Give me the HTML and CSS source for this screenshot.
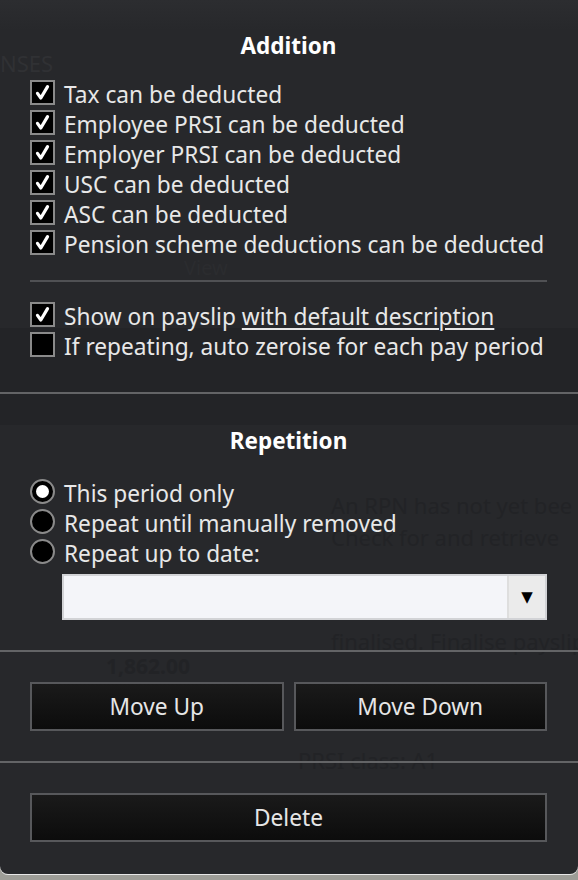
FILE: index.html
```html
<!DOCTYPE html>
<html>
<head>
<meta charset="utf-8">
<link rel="stylesheet" href="styles.css">
</head>
<body>
<div class="popup">
  <div class="backdrop" aria-hidden="true">
    <div class="band band-top"></div>
    <div class="band band-mid"></div>
    <span class="ghost g-nses">NSES</span>
    <span class="ghost g-view">View</span>
    <span class="ghost g-rpn1">An RPN has not yet bee</span>
    <span class="ghost g-rpn2">Check for and retrieve</span>
    <span class="ghost g-fin">finalised. Finalise payslip</span>
    <span class="ghost g-amt">1,862.00</span>
    <span class="ghost g-prsi">PRSI class: A1</span>
  </div>

  <section class="section section-addition">
    <h2 class="heading">Addition</h2>
    <ul class="list">
      <li class="row"><span class="check on"><svg viewBox="0 0 25 25"><path d="M6.5 13.5 L10.5 19 L18.5 5.5"/></svg></span>Tax can be deducted</li>
      <li class="row"><span class="check on"><svg viewBox="0 0 25 25"><path d="M6.5 13.5 L10.5 19 L18.5 5.5"/></svg></span>Employee PRSI can be deducted</li>
      <li class="row"><span class="check on"><svg viewBox="0 0 25 25"><path d="M6.5 13.5 L10.5 19 L18.5 5.5"/></svg></span>Employer PRSI can be deducted</li>
      <li class="row"><span class="check on"><svg viewBox="0 0 25 25"><path d="M6.5 13.5 L10.5 19 L18.5 5.5"/></svg></span>USC can be deducted</li>
      <li class="row"><span class="check on"><svg viewBox="0 0 25 25"><path d="M6.5 13.5 L10.5 19 L18.5 5.5"/></svg></span>ASC can be deducted</li>
      <li class="row"><span class="check on"><svg viewBox="0 0 25 25"><path d="M6.5 13.5 L10.5 19 L18.5 5.5"/></svg></span>Pension scheme deductions can be deducted</li>
    </ul>
    <hr class="sep">
    <ul class="list">
      <li class="row"><span class="check on"><svg viewBox="0 0 25 25"><path d="M6.5 13.5 L10.5 19 L18.5 5.5"/></svg></span>Show on payslip&nbsp;<span class="link">with default description</span></li>
      <li class="row"><span class="check"></span>If repeating, auto zeroise for each pay period</li>
    </ul>
  </section>

  <hr class="divider">

  <section class="section section-repetition">
    <h2 class="heading">Repetition</h2>
    <ul class="list">
      <li class="row"><span class="radio on"></span>This period only</li>
      <li class="row"><span class="radio"></span>Repeat until manually removed</li>
      <li class="row"><span class="radio"></span>Repeat up to date:</li>
    </ul>
    <div class="dropdown">
      <div class="dropdown-field"></div>
      <div class="dropdown-btn">▼</div>
    </div>
  </section>

  <hr class="divider">

  <section class="section section-buttons">
    <div class="btn-row">
      <button class="btn">Move Up</button>
      <button class="btn">Move Down</button>
    </div>
  </section>

  <hr class="divider">

  <section class="section section-delete">
    <button class="btn btn-wide">Delete</button>
  </section>
</div>
</body>
</html>
```

FILE: styles.css
```css
* { box-sizing: border-box; }

html, body {
  margin: 0;
  padding: 0;
}

body {
  width: 578px;
  height: 880px;
  background: #9d9d97;
  font-family: "Noto Sans", "Open Sans", "DejaVu Sans", sans-serif;
  color: #e6e6e6;
  overflow: hidden;
}

.popup {
  position: relative;
  width: 578px;
  height: 874px;
  background: #27282b;
  border-radius: 0 0 8px 8px;
  overflow: hidden;
  box-shadow: 0 1px 0 #e8e8e8;
}

/* faint underlying page showing through the overlay */
.backdrop {
  position: absolute;
  inset: 0;
  z-index: 0;
  pointer-events: none;
  overflow: hidden;
}

.band {
  position: absolute;
  left: 0;
  right: 0;
}

.band-top {
  top: 0;
  height: 30px;
  background: linear-gradient(#2c2d30, #27282b);
}

.band-mid {
  top: 328px;
  height: 97px;
  background: #232427;
}

.ghost {
  position: absolute;
  font-size: 22px;
  color: #222326;
  white-space: nowrap;
  line-height: 1;
}

.g-nses { left: 0; top: 52px; color: #303134; }
.g-view { left: 184px; top: 258px; color: #2b2c2f; font-size: 20px; }
.g-rpn1 { left: 331px; top: 494px; }
.g-rpn2 { left: 331px; top: 526px; }
.g-fin { left: 331px; top: 630px; }
.g-amt { left: 106px; top: 656px; font-size: 21px; font-weight: bold; }
.g-prsi { left: 298px; top: 749px; }

.section {
  position: relative;
  z-index: 1;
  padding: 0 31px 0 30px;
}

.heading {
  margin: 0;
  height: 28px;
  line-height: 28px;
  text-align: center;
  font-size: 22.5px;
  font-weight: bold;
  color: #ffffff;
}

.section-addition { padding-top: 32px; padding-bottom: 35px; }
.section-addition .heading { margin-bottom: 20px; }

.list {
  list-style: none;
  margin: 0;
  padding: 0;
  display: flex;
  flex-direction: column;
  gap: 5px;
}

.row {
  display: flex;
  align-items: center;
  height: 25px;
  font-size: 22.7px;
  white-space: nowrap;
  color: #e8e8e8;
  padding-top: 4px;
}

.check {
  flex: none;
  width: 25px;
  height: 25px;
  margin-top: -4px;
  margin-right: 9px;
  border: 2px solid #8a8a8a;
  background: #000;
  display: flex;
  align-items: center;
  justify-content: center;
}

.check svg {
  width: 21px;
  height: 21px;
  fill: none;
  stroke: #ffffff;
  stroke-width: 3.8;
  stroke-linecap: round;
  stroke-linejoin: round;
}

.link {
  text-decoration: underline;
  text-underline-offset: 3px;
  text-decoration-thickness: 1.5px;
}

.sep {
  margin: 25px 0 20px 0;
  height: 2px;
  border: 0;
  background: #505154;
}

.divider {
  position: relative;
  z-index: 1;
  margin: 0;
  height: 2px;
  border: 0;
  background: #636466;
}

.section-repetition { padding-top: 33px; padding-bottom: 30px; }
.section-repetition .heading { margin-bottom: 24px; }

.radio {
  flex: none;
  width: 25px;
  height: 25px;
  margin-top: -4px;
  margin-right: 9px;
  border-radius: 50%;
  border: 2px solid #8a8a8a;
  background: #000;
  display: flex;
  align-items: center;
  justify-content: center;
}

.radio.on::after {
  content: "";
  width: 13px;
  height: 13px;
  border-radius: 50%;
  background: #ffffff;
}

.dropdown {
  margin: 10px 0 0 32px;
  height: 46px;
  display: flex;
  border: 2px solid #d2d3d6;
  background: #f4f5f9;
}

.dropdown-field {
  flex: 1;
}

.dropdown-btn {
  flex: none;
  width: 38px;
  background: #ebebeb;
  border-left: 2px solid #dedede;
  color: #000;
  font-size: 15px;
  display: flex;
  align-items: center;
  justify-content: center;
  font-family: "DejaVu Sans", sans-serif;
}

.section-buttons { padding-top: 30px; padding-bottom: 30px; }
.section-delete { padding-top: 30px; padding-bottom: 30px; }

.btn-row {
  display: flex;
  gap: 10px;
}

.btn {
  flex: 1;
  height: 49px;
  border: 2px solid #57585b;
  background: linear-gradient(#1a1a1a, #0c0c0c);
  color: #e6e6e6;
  font-family: "Noto Sans", "Open Sans", "DejaVu Sans", sans-serif;
  font-size: 22.7px;
  padding: 0;
}

.btn-wide {
  width: 517px;
  display: block;
}
```
